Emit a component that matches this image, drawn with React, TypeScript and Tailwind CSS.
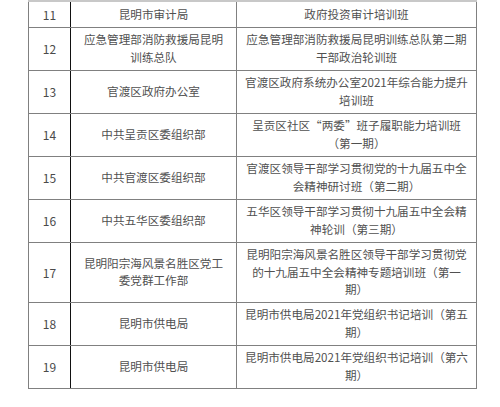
import React from "react";

const rows: { n: string; org: string; cls: React.ReactNode }[] = [
  { n: "11", org: "昆明市审计局", cls: "政府投资审计培训班" },
  { n: "12", org: "应急管理部消防救援局昆明训练总队", cls: "应急管理部消防救援局昆明训练总队第二期干部政治轮训班" },
  { n: "13", org: "官渡区政府办公室", cls: "官渡区政府系统办公室2021年综合能力提升培训班" },
  {
    n: "14",
    org: "中共呈贡区委组织部",
    cls: (
      <>
        呈贡区社区<span className="inline-block w-[1em] text-right">“</span>两委<span className="inline-block w-[1em] text-left">”</span>班子履职能力培训班（第一期）
      </>
    ),
  },
  { n: "15", org: "中共官渡区委组织部", cls: "官渡区领导干部学习贯彻党的十九届五中全会精神研讨班（第二期）" },
  { n: "16", org: "中共五华区委组织部", cls: "五华区领导干部学习贯彻十九届五中全会精神轮训（第三期）" },
  { n: "17", org: "昆明阳宗海风景名胜区党工委党群工作部", cls: "昆明阳宗海风景名胜区领导干部学习贯彻党的十九届五中全会精神专题培训班（第一期）" },
  { n: "18", org: "昆明市供电局", cls: "昆明市供电局2021年党组织书记培训（第五期）" },
  { n: "19", org: "昆明市供电局", cls: "昆明市供电局2021年党组织书记培训（第六期）" },
];

export default function App() {
  return (
    <div
      lang="zh-CN"
      className="w-[500px] h-[407px] bg-white pl-[28px] overflow-hidden [text-spacing-trim:space-all]"
      style={{ fontFamily: '"Noto Sans CJK SC", "Noto Sans", sans-serif' }}
    >
      <table className="table-fixed border-collapse w-[448px] text-[11.6px] leading-[17.3px] text-[#505050] border-t-2 border-t-[#c8c8c8]">
        <colgroup>
          <col className="w-[42px]" />
          <col className="w-[166px]" />
          <col className="w-[240px]" />
        </colgroup>
        <tbody>
          {rows.map((r) => (
            <tr key={r.n}>
              <td className="border border-[#808080] border-r-[#111] text-center align-middle py-[3.7px] px-0 text-[12px] text-[#4a4a4a]">
                {r.n}
              </td>
              <td className="border border-[#808080] border-l-[#111] text-center align-middle py-[3.7px] px-[10px]">
                {r.org}
              </td>
              <td className="border border-[#808080] text-center align-middle py-[3.7px] px-[6px]">
                {r.cls}
              </td>
            </tr>
          ))}
        </tbody>
      </table>
    </div>
  );
}
